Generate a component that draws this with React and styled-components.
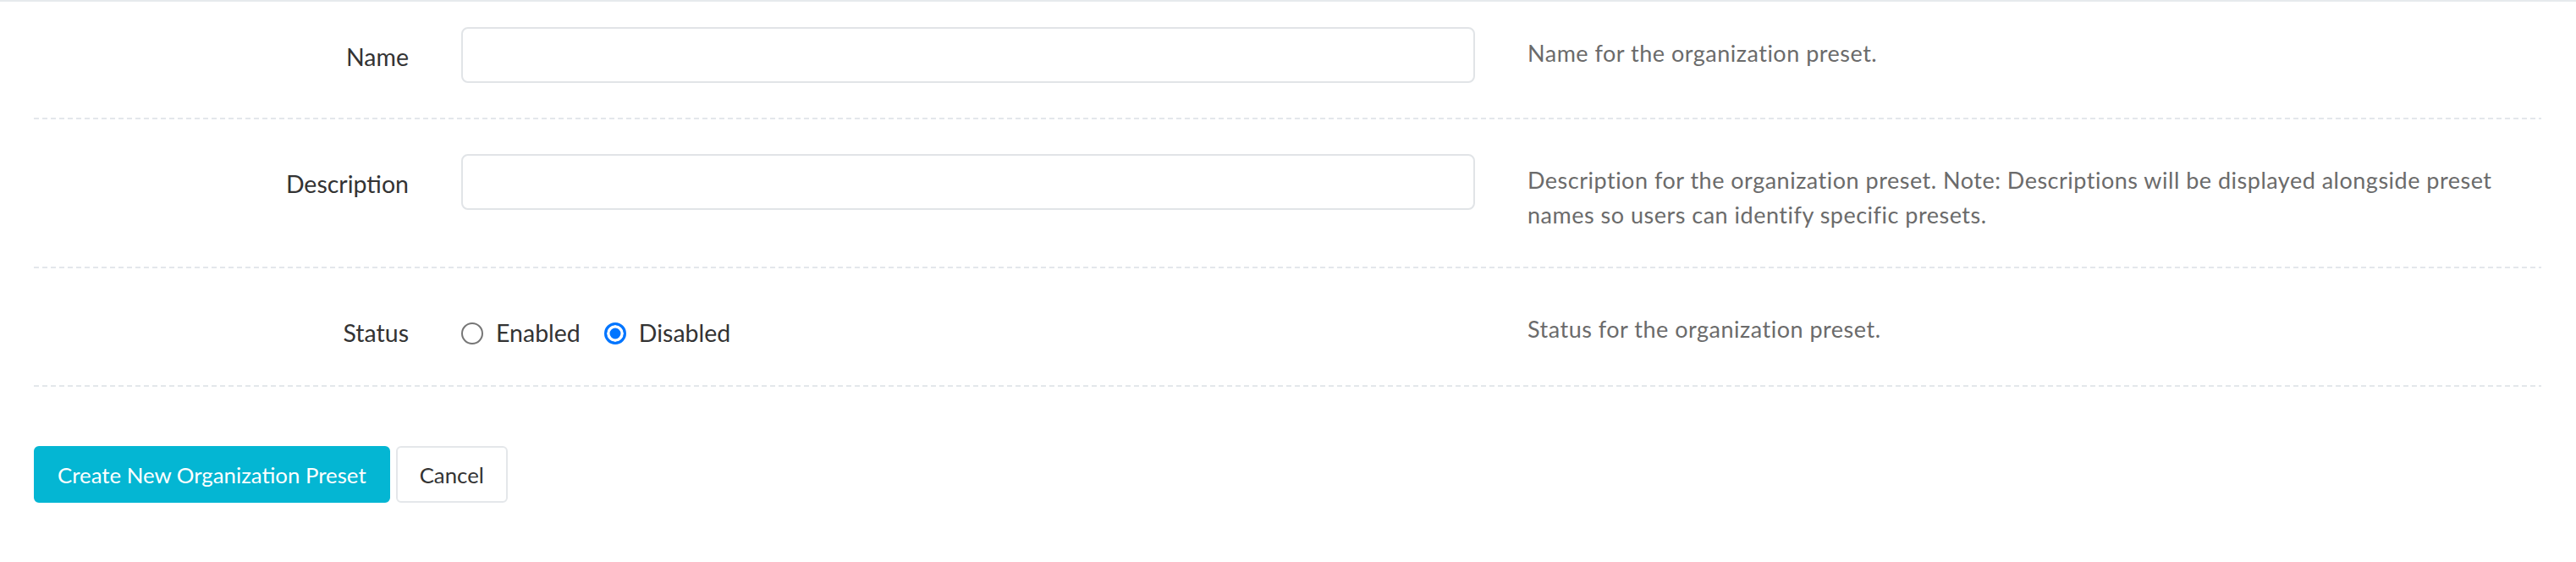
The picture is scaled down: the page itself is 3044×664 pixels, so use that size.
import React from "react";
import styled, { createGlobalStyle } from "styled-components";

const GlobalStyle = createGlobalStyle`
  body {
    margin: 0;
    background: #fff;
    font-family: Lato, "Noto Sans", sans-serif;
    color: #333;
  }
`;

const Page = styled.div`
  border-top: 2px solid #e6eaed;
  padding: 0 41px 40px 40px;
`;

// one form-group: label | control | help text, with a dashed rule under it
const Row = styled.div`
  display: grid;
  grid-template-columns: 443fr 1198fr 1198fr;
  column-gap: 62px;
  align-items: start;
  padding: ${props => (props.$first ? "30px" : "41px")} 0 43px;
  background: repeating-linear-gradient(
      to right,
      #e3e7eb 0 6px,
      transparent 6px 10px
    )
    left bottom / 100% 2px no-repeat;
`;

const Label = styled.label`
  text-align: right;
  font-size: 28.5px;
  line-height: 41px;
  padding-top: 15px;
  color: #333;
`;

const TextInput = styled.input`
  display: block;
  box-sizing: border-box;
  width: 100%;
  height: 66px;
  margin: 0;
  padding: 0 24px;
  border: 2px solid #e1e4e7;
  border-radius: 8px;
  font: inherit;
  font-size: 28px;
  outline: none;
`;

const Help = styled.p`
  margin: 0;
  padding-top: 10px;
  font-size: 27px;
  letter-spacing: 0.5px;
  line-height: 41px;
  color: #6b6b6b;
`;

const RadioGroup = styled.div`
  display: flex;
  align-items: center;
  gap: 28px;
  height: 41px;
  padding-top: 15px;
`;

const RadioOption = styled.label`
  display: flex;
  align-items: center;
  gap: 15px;
  font-size: 28.5px;
  line-height: 41px;
  color: #333;
`;

const Radio = styled.input.attrs({ type: "radio" })`
  appearance: none;
  box-sizing: border-box;
  width: 26px;
  height: 26px;
  margin: 0;
  border-radius: 50%;
  border: 2px solid #767676;
  background: #fff;

  &:checked {
    border: 3px solid #0075ff;
    background: #0075ff;
    box-shadow: inset 0 0 0 3.5px #fff;
  }
`;

const Actions = styled.div`
  display: flex;
  gap: 7px;
  padding-top: 70px;
`;

const Button = styled.button`
  box-sizing: border-box;
  height: 67px;
  padding: 0 26px;
  font-family: inherit;
  font-size: 25.8px;
  border-radius: 6px;
  border: 2px solid ${props => (props.$primary ? "#04b6d3" : "#e4e7ea")};
  background: ${props => (props.$primary ? "#04b6d3" : "#fff")};
  color: ${props => (props.$primary ? "#fff" : "#333")};
  cursor: pointer;
`;

export default function App() {
  return (
    <Page>
      <GlobalStyle />
      <form onSubmit={e => e.preventDefault()}>
        <Row $first>
          <Label htmlFor="preset-name">Name</Label>
          <TextInput id="preset-name" type="text" />
          <Help>Name for the organization preset.</Help>
        </Row>
        <Row>
          <Label htmlFor="preset-description">Description</Label>
          <TextInput id="preset-description" type="text" />
          <Help>
            Description for the organization preset. Note: Descriptions will be
            displayed alongside preset names so users can identify specific
            presets.
          </Help>
        </Row>
        <Row>
          <Label>Status</Label>
          <RadioGroup>
            <RadioOption>
              <Radio name="status" value="enabled" />
              Enabled
            </RadioOption>
            <RadioOption>
              <Radio name="status" value="disabled" defaultChecked />
              Disabled
            </RadioOption>
          </RadioGroup>
          <Help>Status for the organization preset.</Help>
        </Row>
        <Actions>
          <Button type="submit" $primary>
            Create New Organization Preset
          </Button>
          <Button type="button">Cancel</Button>
        </Actions>
      </form>
    </Page>
  );
}
